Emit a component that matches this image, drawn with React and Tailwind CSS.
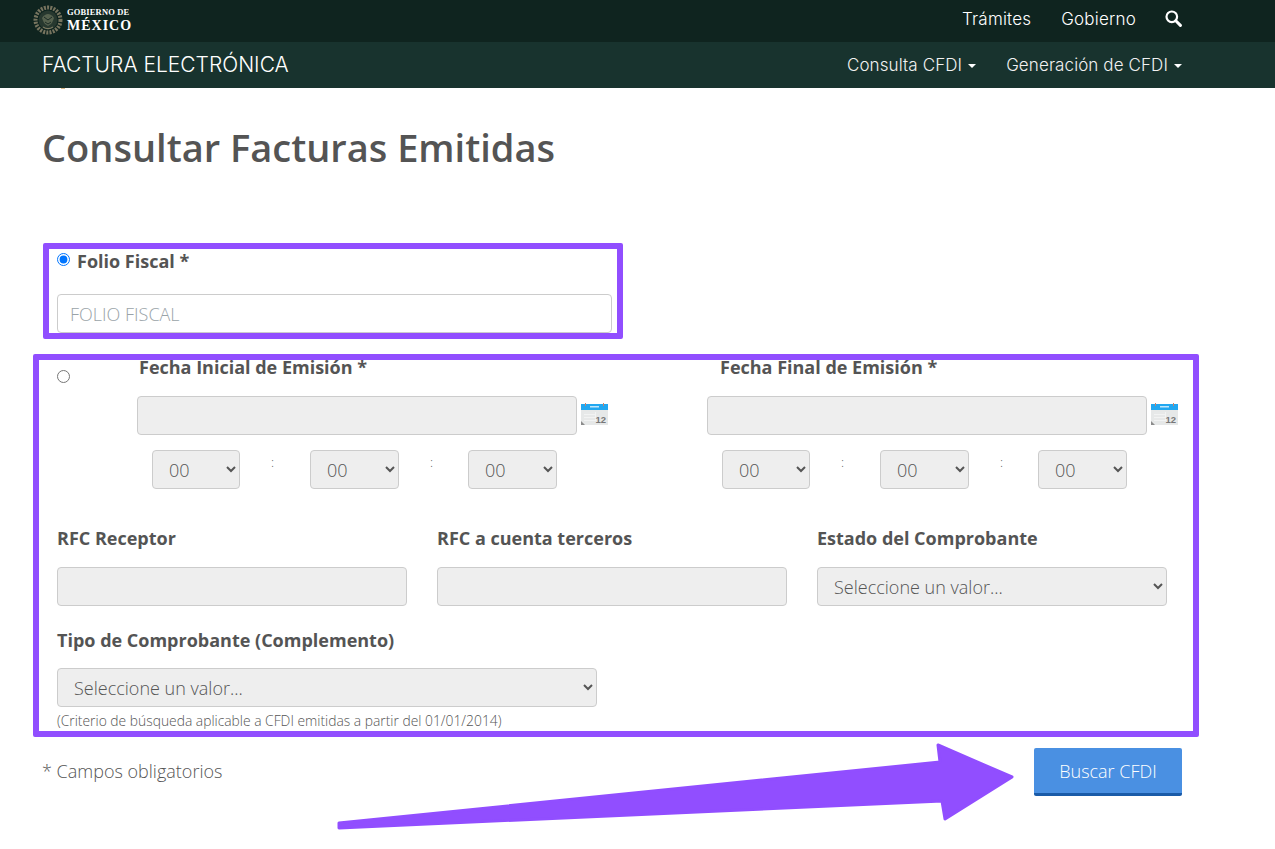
import React from 'react';

const openSans = { fontFamily: '"Open Sans", sans-serif' };

// Seal of the federal government, simplified
function Seal() {
  return (
    <svg width="30" height="30" viewBox="0 0 30 30" className="shrink-0 -mt-[2px]">
      <circle cx="15" cy="15" r="12.5" fill="none" stroke="#77745f" strokeWidth="4" strokeDasharray="2 1.2" />
      <circle cx="15" cy="15" r="9.5" fill="#27382f" />
      <path d="M9 13c2-3 4-4 6-4s4 1 6 4c-1 3-2 5-3 6l-3 2-3-2c-1-1-2-3-3-6z" fill="#56624f" />
      <path d="M11 12l4 3 4-3M12 17l3 2 3-2" stroke="#1a2a24" strokeWidth="1" fill="none" />
      <path d="M10 22c3 2 7 2 10 0" stroke="#7d7a62" strokeWidth="1.2" fill="none" />
    </svg>
  );
}

function SearchGlyph() {
  return (
    <svg width="17" height="17" viewBox="0 0 17 17" className="ml-[29px] -mt-[6px]">
      <circle cx="6.8" cy="6.8" r="5.3" fill="none" stroke="#fff" strokeWidth="2.2" />
      <path d="M10.8 10.8L15.4 15.4" stroke="#fff" strokeWidth="3" strokeLinecap="round" />
    </svg>
  );
}

function CalendarIcon() {
  return (
    <svg width="27" height="22" viewBox="0 0 27 22" className="shrink-0 -mt-[4px]">
      <rect x="0" y="1" width="27" height="21" fill="#e6e8e8" />
      <rect x="0" y="1" width="27" height="6" fill="#22a7f0" />
      <rect x="9" y="3" width="9" height="1.5" fill="#bfe6fb" />
      <rect x="4" y="0" width="1" height="3" fill="#c9826b" />
      <rect x="22" y="0" width="1" height="3" fill="#c9826b" />
      <rect x="3" y="9" width="12" height="9" fill="#f2f3f3" />
      <path d="M3 10h11M3 13h11M3 16h11" stroke="#dcdede" strokeWidth="1" />
      <path d="M0 22v-4l4 4z" fill="#8c8c8c" />
      <text x="14.5" y="19.5" fontSize="9.5" fontWeight="700" fill="#777" fontFamily="Liberation Sans, sans-serif">12</text>
    </svg>
  );
}

function Label({ className = '', children }) {
  return (
    <label className={`block text-[18px] leading-[24px] font-bold text-[#545454] ${className}`}>{children}</label>
  );
}

function GrayInput({ className = '' }) {
  return <input disabled className={`h-[39px] rounded-[4px] border border-[#ccc] bg-[#eee] ${className}`} />;
}

function GraySelect({ className = '', children }) {
  return (
    <select disabled className={`h-[39px] rounded-[4px] border border-[#ccc] bg-[#eee] pl-[12px] text-[18px] font-light text-[#555] opacity-100 ${className}`}>
      {children}
    </select>
  );
}

function TimeRow() {
  const Colon = ({ w }) => (
    <span className={`${w} pl-[31px] -mt-[13px] text-[13px] font-light text-[#555]`}>:</span>
  );
  return (
    <div className="flex items-center ml-[15px] mt-[15px]">
      <GraySelect className="w-[88px]"><option>00</option></GraySelect>
      <Colon w="w-[70px]" />
      <GraySelect className="w-[89px]"><option>00</option></GraySelect>
      <Colon w="w-[69px]" />
      <GraySelect className="w-[89px]"><option>00</option></GraySelect>
    </div>
  );
}

export default function App() {
  return (
    <div className="relative w-[1275px] h-[849px] bg-white overflow-hidden" style={openSans}>
      {/* Top government bar */}
      <div className="h-[42px] bg-[#0f241f] flex items-center pl-[33px] pr-[93px]">
        <Seal />
        <div className="ml-[4px] -mt-[2px] text-white" style={{ fontFamily: '"Liberation Serif", serif' }}>
          <div className="text-[8.5px] leading-[10px] font-bold tracking-[0.15px]">GOBIERNO DE</div>
          <div className="mt-[2px] text-[14px] leading-[14px] font-bold tracking-[1px]">MÉXICO</div>
        </div>
        <nav className="ml-auto flex items-center text-white text-[17px]" style={{ fontFamily: 'Inter, sans-serif' }}>
          <a className="font-light -mt-[3px] tracking-[0.2px]">Trámites</a>
          <a className="ml-[30px] font-light -mt-[3px] tracking-[0.2px]">Gobierno</a>
          <SearchGlyph />
        </nav>
      </div>

      {/* Section bar */}
      <div className="h-[46px] bg-[#18332e] flex items-center pl-[42px] pr-[93px]" style={{ fontFamily: 'Inter, sans-serif' }}>
        <span className="text-[21px] font-light text-white -mt-[1px]">FACTURA ELECTRÓNICA</span>
        <nav className="ml-auto flex items-center mt-[2px] text-[17px] font-light text-[#f1f1f1]">
          <a className="flex items-center tracking-[0.1px]">Consulta CFDI<span className="ml-[6px] border-x-[4px] border-t-[4px] border-x-transparent border-t-white" /></a>
          <a className="flex items-center ml-[30px] tracking-[0.1px]">Generación de CFDI<span className="ml-[6px] border-x-[4px] border-t-[4px] border-x-transparent border-t-white" /></a>
        </nav>
      </div>

      {/* Sliver of the breadcrumb hidden under the bar */}
      <span className="absolute left-[61px] top-[88px] w-[4px] h-[1px] bg-[#d9b98a]" />

      <main className="pl-[33px]">
        <h1 className="ml-[9px] mt-[33px] mb-[70px] text-[38px] leading-[52px] font-semibold text-[#545454]">Consultar Facturas Emitidas</h1>

        {/* Folio fiscal */}
        <div className="ml-[10px] w-[580px] h-[96px] border-[6px] border-[#914eff] rounded-[2px] pl-[8px]">
          <div className="flex items-center h-[24px]">
            <input type="radio" defaultChecked name="criterio" className="w-[13px] h-[13px] -mt-[4px]" />
            <Label className="ml-[7px]">Folio Fiscal *</Label>
          </div>
          <input
            placeholder="FOLIO FISCAL"
            className="mt-[21px] w-[555px] h-[39px] rounded-[4px] border border-[#ccc] pl-[12px] text-[18px] font-light text-[#555] placeholder:text-[#9aa3a8]"
          />
        </div>

        {/* Rango de fechas y filtros */}
        <div className="mt-[15px] w-[1166px] h-[383px] border-[6px] border-[#914eff] rounded-[2px]">
          <div className="flex">
            <input type="radio" name="criterio" className="ml-[18px] mt-[10px] w-[13px] h-[13px] shrink-0" />
            <div className="ml-[67px] w-[570px]">
              <Label className="ml-[2px] -mt-[5px]">Fecha Inicial de Emisión *</Label>
              <div className="flex items-center mt-[17px]">
                <GrayInput className="w-[440px]" />
                <span className="ml-[4px]"><CalendarIcon /></span>
              </div>
              <TimeRow />
            </div>
            <div>
              <Label className="ml-[13px] -mt-[5px]">Fecha Final de Emisión *</Label>
              <div className="flex items-center mt-[17px]">
                <GrayInput className="w-[440px]" />
                <span className="ml-[4px]"><CalendarIcon /></span>
              </div>
              <TimeRow />
            </div>
          </div>

          <div className="flex gap-[30px] ml-[18px] mt-[37px]">
            <div className="w-[350px]">
              <Label>RFC Receptor</Label>
              <GrayInput className="mt-[17px] w-full" />
            </div>
            <div className="w-[350px]">
              <Label>RFC a cuenta terceros</Label>
              <GrayInput className="mt-[17px] w-full" />
            </div>
            <div className="w-[350px]">
              <Label>Estado del Comprobante</Label>
              <GraySelect className="mt-[17px] w-full"><option>Seleccione un valor...</option></GraySelect>
            </div>
          </div>

          <div className="ml-[18px] mt-[22px]">
            <Label>Tipo de Comprobante (Complemento)</Label>
            <GraySelect className="mt-[16px] w-[540px]"><option>Seleccione un valor...</option></GraySelect>
            <p className="mt-[5px] text-[13.85px] leading-[18px] font-light text-[#555]">(Criterio de búsqueda aplicable a CFDI emitidas a partir del 01/01/2014)</p>
          </div>
        </div>

        <div className="flex items-start mt-[11px] w-[1149px]">
          <p className="ml-[9px] mt-[10px] text-[18px] leading-[26px] font-light text-[#555]">* Campos obligatorios</p>
          <button className="ml-auto w-[148px] h-[48px] pt-[2px] rounded-[2px] bg-[#4a90e2] border-b-[3px] border-[#1a5ba8] text-[18px] font-light text-white">
            Buscar CFDI
          </button>
        </div>
      </main>

      {/* Annotation arrow laid over the page */}
      <svg className="absolute inset-0 pointer-events-none" width="1275" height="849" viewBox="0 0 1275 849">
        <path
          d="M339 823 L940 762 L938 745 L1012 777 L945 819 L942 801 L339 828 Z"
          fill="#914eff"
          stroke="#914eff"
          strokeWidth="3"
          strokeLinejoin="round"
        />
      </svg>
    </div>
  );
}
